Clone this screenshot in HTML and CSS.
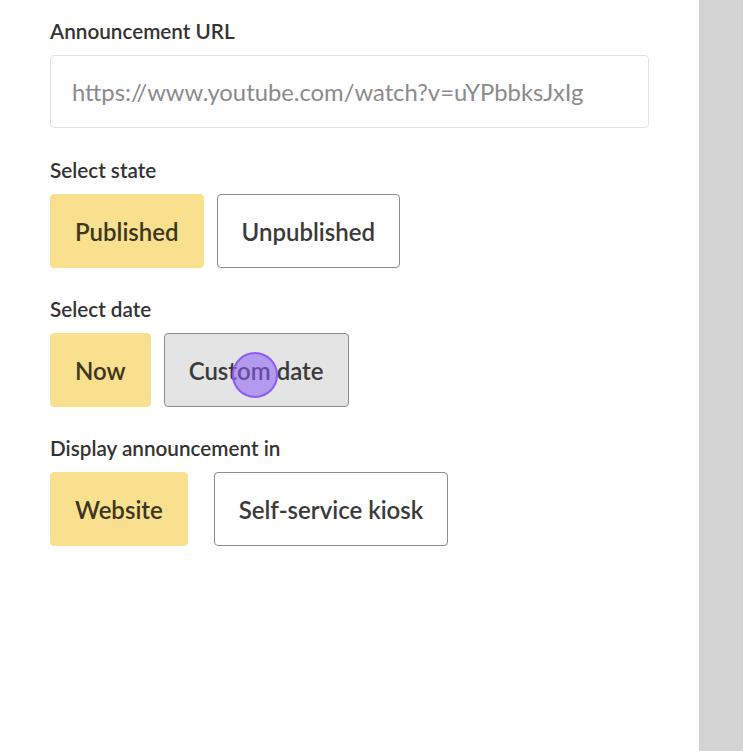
FILE: index.html
```html
<!DOCTYPE html>
<html lang="en">
<head>
    <meta charset="UTF-8">
    <meta name="viewport" content="width=device-width, initial-scale=1.0">
    <title>Announcement</title>
    <link rel="stylesheet" href="styles.css">
</head>
<body>
    <div class="page">
        <form class="form">
            <div class="field field-url">
                <label class="field-label" for="announcementUrl">Announcement URL</label>
                <input class="text-input" id="announcementUrl" type="text" placeholder="https://www.youtube.com/watch?v=uYPbbksJxIg">
            </div>

            <div class="field">
                <div class="field-label">Select state</div>
                <div class="choice-row">
                    <button type="button" class="choice choice-active">Published</button>
                    <button type="button" class="choice">Unpublished</button>
                </div>
            </div>

            <div class="field">
                <div class="field-label">Select date</div>
                <div class="choice-row">
                    <button type="button" class="choice choice-active">Now</button>
                    <button type="button" class="choice choice-pressed">Custom date
                        <span class="click-dot"></span>
                    </button>
                </div>
            </div>

            <div class="field">
                <div class="field-label">Display announcement in</div>
                <div class="choice-row choice-row-wide">
                    <button type="button" class="choice choice-active">Website</button>
                    <button type="button" class="choice">Self-service kiosk</button>
                </div>
            </div>
        </form>
        <div class="side"></div>
    </div>
</body>
</html>
```

FILE: styles.css
```css
body {
    margin: 0;
    font-family: Lato, "Open Sans", sans-serif;
    color: #333;
    background: #fff;
}
.page {
    display: flex;
    min-height: 751px;
}
.form {
    flex: 1;
    padding: 19px 0 0 50px;
}
.side {
    width: 44px;
    background-color: #d4d4d4;
}
.field {
    margin-bottom: 29px;
}
.field-url {
    margin-bottom: 30px;
}
.field-label {
    display: block;
    font-size: 20.7px;
    font-weight: 600;
    line-height: 24px;
    color: #333;
    margin-bottom: 12px;
}
.text-input {
    box-sizing: border-box;
    width: 599px;
    height: 73px;
    padding: 0 21px;
    border: 1px solid #e2e2e2;
    border-radius: 4px;
    font-family: inherit;
    font-size: 23.8px;
    color: #333;
    outline: none;
}
.text-input::placeholder {
    color: #8a8a8a;
}
.choice-row {
    display: flex;
    gap: 13px;
}
.choice-row-wide {
    gap: 26px;
}
.choice {
    position: relative;
    box-sizing: border-box;
    height: 74px;
    padding: 0 24px;
    border: 1px solid #8c8c8c;
    border-radius: 4px;
    background-color: #fff;
    font-family: inherit;
    font-size: 24px;
    font-weight: 600;
    color: #3a3a3a;
    cursor: pointer;
}
.choice-active {
    background-color: #f9e08e;
    border-color: #f9e08e;
    color: #3b3621;
}
.choice-pressed {
    background-color: #e4e4e4;
}
.click-dot {
    position: absolute;
    left: 67px;
    top: 18px;
    width: 42px;
    height: 42px;
    border: 2px solid #8b5cf6;
    border-radius: 50%;
    background-color: rgba(139, 92, 246, 0.55);
}
```
